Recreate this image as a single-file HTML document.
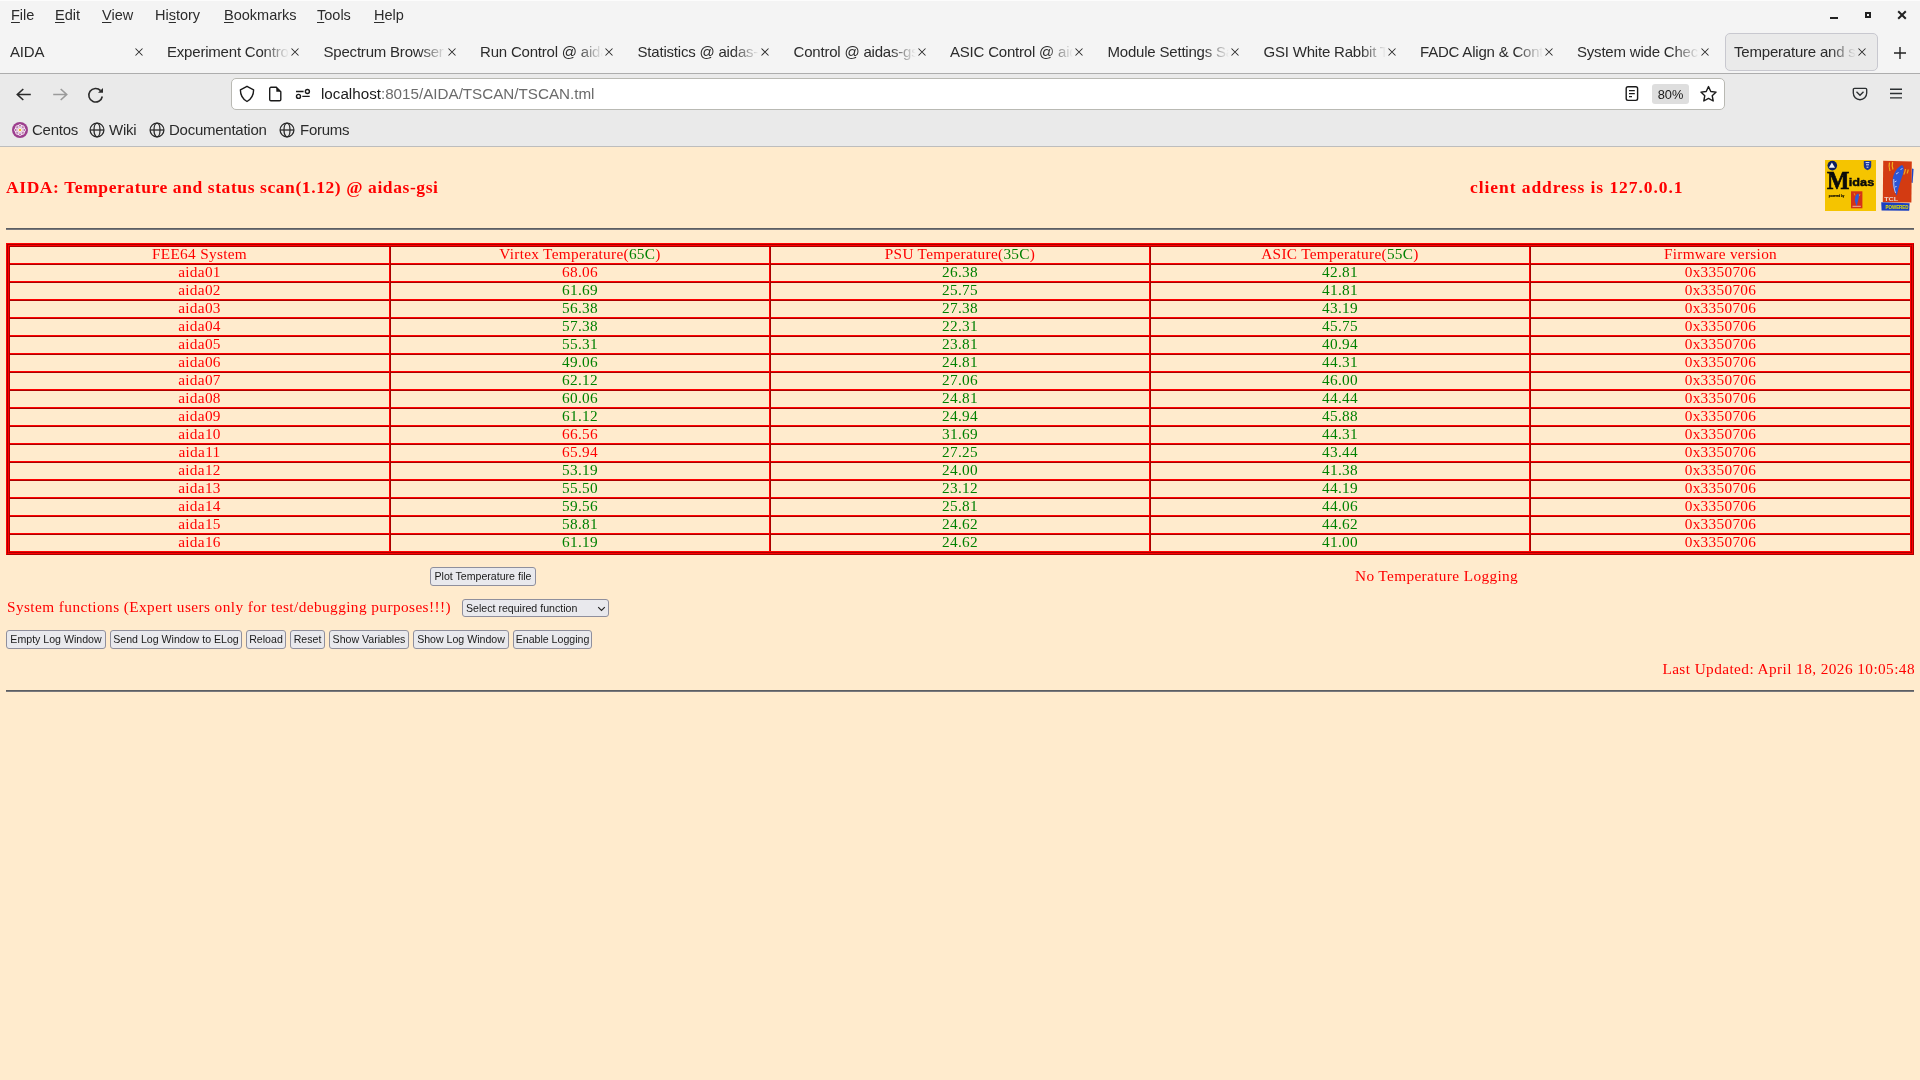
<!DOCTYPE html>
<html><head><meta charset="utf-8">
<style>
*{box-sizing:border-box}
html,body{margin:0;padding:0}
body{width:1920px;height:1080px;overflow:hidden;position:relative;background:#ffebcd;font-family:"Liberation Sans",sans-serif}
.abs{position:absolute}
#titlebar{left:0;top:0;width:1920px;height:74px;background:#f4f4f4;border-top:1px solid #fcfcfc}
#sep1{left:0;top:73px;width:1920px;height:1px;background:#adadad}
#nav{left:0;top:74px;width:1920px;height:73px;background:#eaeaea;border-bottom:1px solid #bdbdbd}
.menu{top:5px;font-size:14.5px;color:#2b2b2b;line-height:20px}
.menu u{text-decoration:underline;text-decoration-thickness:1.3px;text-underline-offset:1.5px}
.tab{top:42px;font-size:15px;letter-spacing:-0.2px;color:#2b2b2b;line-height:20px;white-space:nowrap;overflow:hidden}
.tabx{top:48px;width:8px;height:8px}
#url{left:231px;top:78px;width:1494px;height:32px;background:#fff;border:1px solid #b9b9b3;border-radius:5px}
.bm{top:121px;font-size:15px;letter-spacing:-0.25px;color:#2b2b2b;line-height:18px;white-space:nowrap}
#page{left:0;top:147px;width:1920px;height:933px}
.serif{font-family:"Liberation Serif",serif}
</style><style>
.cell{height:16px;line-height:16px;font-family:"Liberation Serif",serif;font-size:15.3px;letter-spacing:0.3px;text-align:center;white-space:nowrap}
.title{font-weight:bold;color:#ff0000;line-height:22px;white-space:nowrap}
.txt{font-size:15.3px;letter-spacing:0.37px;color:#ff0000;line-height:18px;white-space:nowrap}
.hr{left:6px;width:1908px;height:2px;background:linear-gradient(#5c5e62 50%,#78787c 50%)}
.btn{height:19px;border:1px solid #8f8f9d;border-radius:3px;background:#e9e9ed;font-size:10.6px;line-height:17px;color:#1a1a1a;text-align:center;white-space:nowrap;overflow:hidden}
.sel{text-align:left;padding-left:3px;height:18px;line-height:16px}
</style></head><body>
<div id="root" style="position:absolute;left:0;top:0;width:1920px;height:1080px;will-change:transform"><div class="abs" id="titlebar"></div>
<div class="abs" id="sep1"></div>
<div class="abs" id="nav"></div>

<!-- menu -->
<div class="abs menu" style="left:11px"><u>F</u>ile</div>
<div class="abs menu" style="left:55px"><u>E</u>dit</div>
<div class="abs menu" style="left:102px"><u>V</u>iew</div>
<div class="abs menu" style="left:155px">Hi<u>s</u>tory</div>
<div class="abs menu" style="left:224px"><u>B</u>ookmarks</div>
<div class="abs menu" style="left:317px"><u>T</u>ools</div>
<div class="abs menu" style="left:374px"><u>H</u>elp</div>


<!-- window controls -->
<div class="abs" style="left:1830px;top:17px;width:8px;height:2px;background:#222"></div>
<div class="abs" style="left:1865px;top:12px;width:6px;height:6px;border:2px solid #222"></div>
<svg class="abs" style="left:1897px;top:10px" width="10" height="10" viewBox="0 0 10 10"><path d="M1.2 1.2L8.8 8.8M8.8 1.2L1.2 8.8" stroke="#222" stroke-width="2"/></svg>

<!-- active tab -->
<div class="abs" style="left:1725px;top:33px;width:153px;height:38px;background:#eaeaea;border:1px solid #c8c8cf;border-radius:5px"></div>
<div class="abs tab" style="left:10px;width:123px;">AIDA</div>
<svg class="abs tabx" style="left:135px" viewBox="0 0 8 8"><path d="M0.5 0.5L7.5 7.5M7.5 0.5L0.5 7.5" stroke="#2a2a2a" stroke-width="1.05"/></svg>
<div class="abs tab" style="left:167px;width:122px;mask-image:linear-gradient(to right,#000 calc(100% - 26px),transparent);-webkit-mask-image:linear-gradient(to right,#000 calc(100% - 26px),transparent);">Experiment Control</div>
<svg class="abs tabx" style="left:291px" viewBox="0 0 8 8"><path d="M0.5 0.5L7.5 7.5M7.5 0.5L0.5 7.5" stroke="#2a2a2a" stroke-width="1.05"/></svg>
<div class="abs tab" style="left:323.5px;width:122.5px;mask-image:linear-gradient(to right,#000 calc(100% - 26px),transparent);-webkit-mask-image:linear-gradient(to right,#000 calc(100% - 26px),transparent);">Spectrum Browser</div>
<svg class="abs tabx" style="left:448px" viewBox="0 0 8 8"><path d="M0.5 0.5L7.5 7.5M7.5 0.5L0.5 7.5" stroke="#2a2a2a" stroke-width="1.05"/></svg>
<div class="abs tab" style="left:480px;width:123px;mask-image:linear-gradient(to right,#000 calc(100% - 26px),transparent);-webkit-mask-image:linear-gradient(to right,#000 calc(100% - 26px),transparent);">Run Control @ aidas-gsi</div>
<svg class="abs tabx" style="left:605px" viewBox="0 0 8 8"><path d="M0.5 0.5L7.5 7.5M7.5 0.5L0.5 7.5" stroke="#2a2a2a" stroke-width="1.05"/></svg>
<div class="abs tab" style="left:637.5px;width:121.5px;mask-image:linear-gradient(to right,#000 calc(100% - 26px),transparent);-webkit-mask-image:linear-gradient(to right,#000 calc(100% - 26px),transparent);">Statistics @ aidas-gsi</div>
<svg class="abs tabx" style="left:761px" viewBox="0 0 8 8"><path d="M0.5 0.5L7.5 7.5M7.5 0.5L0.5 7.5" stroke="#2a2a2a" stroke-width="1.05"/></svg>
<div class="abs tab" style="left:793.5px;width:122.5px;mask-image:linear-gradient(to right,#000 calc(100% - 26px),transparent);-webkit-mask-image:linear-gradient(to right,#000 calc(100% - 26px),transparent);">Control @ aidas-gsi</div>
<svg class="abs tabx" style="left:918px" viewBox="0 0 8 8"><path d="M0.5 0.5L7.5 7.5M7.5 0.5L0.5 7.5" stroke="#2a2a2a" stroke-width="1.05"/></svg>
<div class="abs tab" style="left:950px;width:123px;mask-image:linear-gradient(to right,#000 calc(100% - 26px),transparent);-webkit-mask-image:linear-gradient(to right,#000 calc(100% - 26px),transparent);">ASIC Control @ aidas-gsi</div>
<svg class="abs tabx" style="left:1075px" viewBox="0 0 8 8"><path d="M0.5 0.5L7.5 7.5M7.5 0.5L0.5 7.5" stroke="#2a2a2a" stroke-width="1.05"/></svg>
<div class="abs tab" style="left:1107.5px;width:121.5px;mask-image:linear-gradient(to right,#000 calc(100% - 26px),transparent);-webkit-mask-image:linear-gradient(to right,#000 calc(100% - 26px),transparent);">Module Settings Save</div>
<svg class="abs tabx" style="left:1231px" viewBox="0 0 8 8"><path d="M0.5 0.5L7.5 7.5M7.5 0.5L0.5 7.5" stroke="#2a2a2a" stroke-width="1.05"/></svg>
<div class="abs tab" style="left:1263.5px;width:122.5px;mask-image:linear-gradient(to right,#000 calc(100% - 26px),transparent);-webkit-mask-image:linear-gradient(to right,#000 calc(100% - 26px),transparent);">GSI White Rabbit Trigger</div>
<svg class="abs tabx" style="left:1388px" viewBox="0 0 8 8"><path d="M0.5 0.5L7.5 7.5M7.5 0.5L0.5 7.5" stroke="#2a2a2a" stroke-width="1.05"/></svg>
<div class="abs tab" style="left:1420px;width:123px;mask-image:linear-gradient(to right,#000 calc(100% - 26px),transparent);-webkit-mask-image:linear-gradient(to right,#000 calc(100% - 26px),transparent);">FADC Align &amp; Control</div>
<svg class="abs tabx" style="left:1545px" viewBox="0 0 8 8"><path d="M0.5 0.5L7.5 7.5M7.5 0.5L0.5 7.5" stroke="#2a2a2a" stroke-width="1.05"/></svg>
<div class="abs tab" style="left:1577px;width:122px;mask-image:linear-gradient(to right,#000 calc(100% - 26px),transparent);-webkit-mask-image:linear-gradient(to right,#000 calc(100% - 26px),transparent);">System wide Checks</div>
<svg class="abs tabx" style="left:1701px" viewBox="0 0 8 8"><path d="M0.5 0.5L7.5 7.5M7.5 0.5L0.5 7.5" stroke="#2a2a2a" stroke-width="1.05"/></svg>
<div class="abs tab" style="left:1734px;width:122px;mask-image:linear-gradient(to right,#000 calc(100% - 26px),transparent);-webkit-mask-image:linear-gradient(to right,#000 calc(100% - 26px),transparent);">Temperature and status scan</div>
<svg class="abs tabx" style="left:1858px" viewBox="0 0 8 8"><path d="M0.5 0.5L7.5 7.5M7.5 0.5L0.5 7.5" stroke="#2a2a2a" stroke-width="1.05"/></svg>
<svg class="abs" style="left:1893px;top:46px" width="14" height="14" viewBox="0 0 14 14"><path d="M7 1V13M1 7H13" stroke="#222" stroke-width="1.4"/></svg>

<!-- nav buttons -->
<svg class="abs" style="left:14px;top:86px" width="20" height="18" viewBox="0 0 20 18"><path d="M3.3 8.5H16.8M9.3 3L3.3 8.5L9.3 14" fill="none" stroke="#2b2b2b" stroke-width="1.6"/></svg>
<svg class="abs" style="left:50px;top:86px" width="20" height="18" viewBox="0 0 20 18"><path d="M3.2 8.5H16.7M10.7 3L16.7 8.5L10.7 14" fill="none" stroke="#9a9a9a" stroke-width="1.6"/></svg>
<svg class="abs" style="left:86px;top:85px" width="20" height="20" viewBox="0 0 20 20"><path d="M16.3 11.5A6.8 6.8 0 1 1 14.6 5.6" fill="none" stroke="#2b2b2b" stroke-width="1.6"/><path d="M12 7.7L17 3V7.7Z" fill="#2b2b2b"/></svg>

<div class="abs" id="url"></div>
<svg class="abs" style="left:238px;top:85px" width="18" height="18" viewBox="0 0 18 18"><path d="M9 1.3L15.6 4.9C15.6 10.5 13.5 13.8 9 16.5C4.5 13.8 2.4 10.5 2.4 4.9Z" fill="none" stroke="#1a1a1a" stroke-width="1.4" stroke-linejoin="round"/></svg>
<svg class="abs" style="left:267px;top:86px" width="16" height="16" viewBox="0 0 16 16"><path d="M4 1.3H9.3L13.8 5.7V13.4A1.3 1.3 0 0 1 12.5 14.7H4A1.3 1.3 0 0 1 2.7 13.4V2.6A1.3 1.3 0 0 1 4 1.3Z" fill="none" stroke="#1a1a1a" stroke-width="1.4"/><path d="M9.3 1.3V5.7H13.8Z" fill="#1a1a1a"/></svg>
<svg class="abs" style="left:294px;top:87px" width="18" height="14" viewBox="0 0 18 14"><path d="M2 4.5H9.6M8.3 9.4H15.7" stroke="#1a1a1a" stroke-width="1.4"/><circle cx="13.4" cy="4.5" r="2" fill="none" stroke="#1a1a1a" stroke-width="1.4"/><circle cx="4.5" cy="9.4" r="2" fill="none" stroke="#1a1a1a" stroke-width="1.4"/></svg>
<div class="abs" style="left:321px;top:84px;font-size:15.2px;line-height:20px;color:#1a1a1a;white-space:nowrap">localhost<span style="color:#6b6b6b">:8015/AIDA/TSCAN/TSCAN.tml</span></div>

<svg class="abs" style="left:1624px;top:85px" width="16" height="17" viewBox="0 0 16 17"><rect x="2.2" y="1.8" width="11.4" height="13.6" rx="1.8" fill="none" stroke="#1a1a1a" stroke-width="1.4"/><path d="M5 5.6H10.8M5 8.6H10.8M5 11.6H8" stroke="#1a1a1a" stroke-width="1.3"/></svg>
<div class="abs" style="left:1652px;top:84px;width:37px;height:20px;background:#dedede;border-radius:3px"></div>
<div class="abs" style="left:1652px;top:85px;width:37px;height:20px;font-size:12.8px;line-height:20px;text-align:center;color:#1a1a1a">80%</div>
<svg class="abs" style="left:1699px;top:85px" width="19" height="18" viewBox="0 0 19 18"><path d="M9.5 1.6L11.8 6.5L17.1 7.1L13.2 10.7L14.2 16L9.5 13.4L4.8 16L5.8 10.7L1.9 7.1L7.2 6.5Z" fill="none" stroke="#1a1a1a" stroke-width="1.4" stroke-linejoin="round"/></svg>
<svg class="abs" style="left:1851px;top:86px" width="18" height="16" viewBox="0 0 18 16"><path d="M3.5 2.3H14.5A1.2 1.2 0 0 1 15.7 3.5V7A6.7 6.7 0 0 1 2.3 7V3.5A1.2 1.2 0 0 1 3.5 2.3Z" fill="none" stroke="#2b2f31" stroke-width="1.35"/><path d="M5.5 5.8L9 9.3L12.5 5.8" fill="none" stroke="#2b2f31" stroke-width="1.35"/></svg>
<svg class="abs" style="left:1889px;top:87px" width="14" height="13" viewBox="0 0 14 13"><path d="M1 2.2H13M1 6.5H13M1 10.8H13" stroke="#2b2f31" stroke-width="1.35"/></svg>

<!-- bookmarks -->
<svg class="abs" style="left:12px;top:122px" width="16" height="16" viewBox="0 0 16 16"><circle cx="8" cy="8" r="8" fill="#9d3f8e"/><g fill="none" stroke="#fff" stroke-width="0.9"><circle cx="8" cy="4.6" r="2"/><circle cx="8" cy="11.4" r="2"/><circle cx="4.6" cy="8" r="2"/><circle cx="11.4" cy="8" r="2"/><circle cx="5.6" cy="5.6" r="2"/><circle cx="10.4" cy="10.4" r="2"/><circle cx="10.4" cy="5.6" r="2"/><circle cx="5.6" cy="10.4" r="2"/></g><circle cx="8" cy="8" r="1.3" fill="#f0b030"/></svg>
<div class="abs bm" style="left:32px">Centos</div>
<svg class="abs" style="left:89px;top:122px" width="16" height="16" viewBox="0 0 16 16"><g fill="none" stroke="#2b2b2b" stroke-width="1.3"><circle cx="8" cy="8" r="6.9"/><ellipse cx="8" cy="8" rx="3" ry="6.9"/><path d="M1.1 8H14.9"/></g></svg><div class="abs bm" style="left:109px">Wiki</div>
<svg class="abs" style="left:149px;top:122px" width="16" height="16" viewBox="0 0 16 16"><g fill="none" stroke="#2b2b2b" stroke-width="1.3"><circle cx="8" cy="8" r="6.9"/><ellipse cx="8" cy="8" rx="3" ry="6.9"/><path d="M1.1 8H14.9"/></g></svg><div class="abs bm" style="left:169px">Documentation</div>
<svg class="abs" style="left:279px;top:122px" width="16" height="16" viewBox="0 0 16 16"><g fill="none" stroke="#2b2b2b" stroke-width="1.3"><circle cx="8" cy="8" r="6.9"/><ellipse cx="8" cy="8" rx="3" ry="6.9"/><path d="M1.1 8H14.9"/></g></svg><div class="abs bm" style="left:300px">Forums</div>

<svg class="abs" style="left:1825px;top:160px" width="51" height="51" viewBox="0 0 51 51">
<rect width="51" height="51" fill="#f5c400"/>
<circle cx="7.3" cy="5.6" r="4.8" fill="#0b1f60"/>
<path d="M6.9 2.6L10 7.8H3.8Z" fill="#f2f2f2"/>
<path d="M38.8 1H46.2V6C46.2 8.2 44.4 9.6 42.5 10.2C40.6 9.6 38.8 8.2 38.8 6Z" fill="#1a3596"/>
<path d="M40.6 2.6H44.4M41 4.8H44M41.6 7.2H43.4" stroke="#dfe6f8" stroke-width="1"/>
<text x="1.9" y="28.6" font-family="Liberation Serif" font-weight="bold" font-size="25.5" fill="#0a0a0a" stroke="#0a0a0a" stroke-width="0.7" textLength="22.4" lengthAdjust="spacingAndGlyphs">M</text>
<text x="23.8" y="25.9" font-family="Liberation Sans" font-weight="bold" font-size="11.4" fill="#0a0a0a" stroke="#0a0a0a" stroke-width="0.45" textLength="25.4" lengthAdjust="spacingAndGlyphs">idas</text>
<text x="3.8" y="37" font-family="Liberation Sans" font-weight="bold" font-size="3.6" fill="#000" stroke="#000" stroke-width="0.15" textLength="15.5" lengthAdjust="spacingAndGlyphs">powered by</text>
<rect x="26" y="31.3" width="11.4" height="17" fill="#d43218"/>
<path d="M29.2 33.2L30 35.5M35 34L34.2 36" stroke="#f0a020" stroke-width="0.8"/>
<path d="M33 33.6C34.4 34.2 34.2 37.5 33.2 40C32.6 42 32.2 44 31.9 46.2C30.4 44 29.6 40.5 30 38C30.4 36 31.4 34.4 33 33.6Z" fill="#2f5bd8"/>
<path d="M27.5 46.3H35.8" stroke="#f0c0b0" stroke-width="0.9"/>
</svg>
<svg class="abs" style="left:1881px;top:160px" width="33" height="52" viewBox="0 0 33 52">
<path d="M31 8.5L32.6 8.9L31.6 23L30.2 22.6Z" fill="#1f46c8"/>
<path d="M2.2 0.8L30.8 1.4L30.4 42.6L1.8 42.2Z" fill="#d33b12"/>
<path d="M0.2 42.2L28.6 43.2L28.2 50.8L0.6 50.4Z" fill="#1a3fc2"/>
<text x="4.5" y="49.2" font-family="Liberation Sans" font-weight="bold" font-size="6.2" fill="#e6e200" textLength="23" lengthAdjust="spacingAndGlyphs">POWERED</text>
<text x="3.2" y="40.6" font-family="Liberation Sans" font-weight="bold" font-size="5.6" fill="#eed2c8" textLength="14" lengthAdjust="spacingAndGlyphs">TCL</text>
<path d="M8.5 2.5C7.8 5 8 8 9 11M11.6 2C11 4.5 11.2 7 12 9.5M24.5 9C24.2 11 23.6 13 22.8 14.5M27.2 9.5C27 11 26.6 12.5 26 13.5" fill="none" stroke="#f0b020" stroke-width="1.2"/>
<path d="M21 4.9C23.6 6 23.2 12 20.6 18C19.2 22 17.6 28 15.8 35.4C13.2 32 11.2 26 11.6 20C12 14 16 7 21 4.9Z" fill="#2b55d6"/>
<path d="M12.8 19C12.4 24 13 29 14.6 33M15 14L17.5 12.5M13.5 22L15.5 21M13.8 27L15.6 26.5M19.5 10L21.5 8" fill="none" stroke="#e8e8f0" stroke-width="0.8"/>
</svg>
<div class="abs" style="left:6px;top:243px;width:1908px;height:312px;border:1px solid;border-color:#ff0000 #aa0000 #aa0000 #ff0000"></div>
<div class="abs" style="left:7px;top:244px;width:1906px;height:310px;border:1px solid;border-color:#aa0000 #ff0000 #ff0000 #aa0000"></div>
<div class="abs" style="left:8px;top:245px;width:1904px;height:308px;border:1px solid;border-color:#ff0000 #aa0000 #aa0000 #ff0000"></div>
<div class="abs" style="left:9px;top:246px;width:1902px;height:306px;border:1px solid;border-color:#aa0000 #ff0000 #ff0000 #aa0000"></div>
<div class="abs" style="left:10px;top:263px;width:1900px;height:1px;background:#ff0000"></div>
<div class="abs" style="left:10px;top:264px;width:1900px;height:1px;background:#aa0000"></div>
<div class="abs" style="left:10px;top:281px;width:1900px;height:1px;background:#ff0000"></div>
<div class="abs" style="left:10px;top:282px;width:1900px;height:1px;background:#aa0000"></div>
<div class="abs" style="left:10px;top:299px;width:1900px;height:1px;background:#ff0000"></div>
<div class="abs" style="left:10px;top:300px;width:1900px;height:1px;background:#aa0000"></div>
<div class="abs" style="left:10px;top:317px;width:1900px;height:1px;background:#ff0000"></div>
<div class="abs" style="left:10px;top:318px;width:1900px;height:1px;background:#aa0000"></div>
<div class="abs" style="left:10px;top:335px;width:1900px;height:1px;background:#ff0000"></div>
<div class="abs" style="left:10px;top:336px;width:1900px;height:1px;background:#aa0000"></div>
<div class="abs" style="left:10px;top:353px;width:1900px;height:1px;background:#ff0000"></div>
<div class="abs" style="left:10px;top:354px;width:1900px;height:1px;background:#aa0000"></div>
<div class="abs" style="left:10px;top:371px;width:1900px;height:1px;background:#ff0000"></div>
<div class="abs" style="left:10px;top:372px;width:1900px;height:1px;background:#aa0000"></div>
<div class="abs" style="left:10px;top:389px;width:1900px;height:1px;background:#ff0000"></div>
<div class="abs" style="left:10px;top:390px;width:1900px;height:1px;background:#aa0000"></div>
<div class="abs" style="left:10px;top:407px;width:1900px;height:1px;background:#ff0000"></div>
<div class="abs" style="left:10px;top:408px;width:1900px;height:1px;background:#aa0000"></div>
<div class="abs" style="left:10px;top:425px;width:1900px;height:1px;background:#ff0000"></div>
<div class="abs" style="left:10px;top:426px;width:1900px;height:1px;background:#aa0000"></div>
<div class="abs" style="left:10px;top:443px;width:1900px;height:1px;background:#ff0000"></div>
<div class="abs" style="left:10px;top:444px;width:1900px;height:1px;background:#aa0000"></div>
<div class="abs" style="left:10px;top:461px;width:1900px;height:1px;background:#ff0000"></div>
<div class="abs" style="left:10px;top:462px;width:1900px;height:1px;background:#aa0000"></div>
<div class="abs" style="left:10px;top:479px;width:1900px;height:1px;background:#ff0000"></div>
<div class="abs" style="left:10px;top:480px;width:1900px;height:1px;background:#aa0000"></div>
<div class="abs" style="left:10px;top:497px;width:1900px;height:1px;background:#ff0000"></div>
<div class="abs" style="left:10px;top:498px;width:1900px;height:1px;background:#aa0000"></div>
<div class="abs" style="left:10px;top:515px;width:1900px;height:1px;background:#ff0000"></div>
<div class="abs" style="left:10px;top:516px;width:1900px;height:1px;background:#aa0000"></div>
<div class="abs" style="left:10px;top:533px;width:1900px;height:1px;background:#ff0000"></div>
<div class="abs" style="left:10px;top:534px;width:1900px;height:1px;background:#aa0000"></div>
<div class="abs" style="left:389px;top:247px;width:1px;height:304px;background:#ff0000"></div>
<div class="abs" style="left:390px;top:247px;width:1px;height:304px;background:#aa0000"></div>
<div class="abs" style="left:769px;top:247px;width:1px;height:304px;background:#ff0000"></div>
<div class="abs" style="left:770px;top:247px;width:1px;height:304px;background:#aa0000"></div>
<div class="abs" style="left:1149px;top:247px;width:1px;height:304px;background:#ff0000"></div>
<div class="abs" style="left:1150px;top:247px;width:1px;height:304px;background:#aa0000"></div>
<div class="abs" style="left:1529px;top:247px;width:1px;height:304px;background:#ff0000"></div>
<div class="abs" style="left:1530px;top:247px;width:1px;height:304px;background:#aa0000"></div>
<div class="abs cell" style="left:10px;top:246px;width:379px;color:#ff0000">FEE64 System</div>
<div class="abs cell" style="left:391px;top:246px;width:378px;color:#ff0000">Virtex Temperature(<span style="color:#008000">65C</span>)</div>
<div class="abs cell" style="left:771px;top:246px;width:378px;color:#ff0000">PSU Temperature(<span style="color:#008000">35C</span>)</div>
<div class="abs cell" style="left:1151px;top:246px;width:378px;color:#ff0000">ASIC Temperature(<span style="color:#008000">55C</span>)</div>
<div class="abs cell" style="left:1531px;top:246px;width:379px;color:#ff0000">Firmware version</div>
<div class="abs cell" style="left:10px;top:264px;width:379px;color:#ff0000">aida01</div>
<div class="abs cell" style="left:391px;top:264px;width:378px;color:#ff0000">68.06</div>
<div class="abs cell" style="left:771px;top:264px;width:378px;color:#008000">26.38</div>
<div class="abs cell" style="left:1151px;top:264px;width:378px;color:#008000">42.81</div>
<div class="abs cell" style="left:1531px;top:264px;width:379px;color:#ff0000">0x3350706</div>
<div class="abs cell" style="left:10px;top:282px;width:379px;color:#ff0000">aida02</div>
<div class="abs cell" style="left:391px;top:282px;width:378px;color:#008000">61.69</div>
<div class="abs cell" style="left:771px;top:282px;width:378px;color:#008000">25.75</div>
<div class="abs cell" style="left:1151px;top:282px;width:378px;color:#008000">41.81</div>
<div class="abs cell" style="left:1531px;top:282px;width:379px;color:#ff0000">0x3350706</div>
<div class="abs cell" style="left:10px;top:300px;width:379px;color:#ff0000">aida03</div>
<div class="abs cell" style="left:391px;top:300px;width:378px;color:#008000">56.38</div>
<div class="abs cell" style="left:771px;top:300px;width:378px;color:#008000">27.38</div>
<div class="abs cell" style="left:1151px;top:300px;width:378px;color:#008000">43.19</div>
<div class="abs cell" style="left:1531px;top:300px;width:379px;color:#ff0000">0x3350706</div>
<div class="abs cell" style="left:10px;top:318px;width:379px;color:#ff0000">aida04</div>
<div class="abs cell" style="left:391px;top:318px;width:378px;color:#008000">57.38</div>
<div class="abs cell" style="left:771px;top:318px;width:378px;color:#008000">22.31</div>
<div class="abs cell" style="left:1151px;top:318px;width:378px;color:#008000">45.75</div>
<div class="abs cell" style="left:1531px;top:318px;width:379px;color:#ff0000">0x3350706</div>
<div class="abs cell" style="left:10px;top:336px;width:379px;color:#ff0000">aida05</div>
<div class="abs cell" style="left:391px;top:336px;width:378px;color:#008000">55.31</div>
<div class="abs cell" style="left:771px;top:336px;width:378px;color:#008000">23.81</div>
<div class="abs cell" style="left:1151px;top:336px;width:378px;color:#008000">40.94</div>
<div class="abs cell" style="left:1531px;top:336px;width:379px;color:#ff0000">0x3350706</div>
<div class="abs cell" style="left:10px;top:354px;width:379px;color:#ff0000">aida06</div>
<div class="abs cell" style="left:391px;top:354px;width:378px;color:#008000">49.06</div>
<div class="abs cell" style="left:771px;top:354px;width:378px;color:#008000">24.81</div>
<div class="abs cell" style="left:1151px;top:354px;width:378px;color:#008000">44.31</div>
<div class="abs cell" style="left:1531px;top:354px;width:379px;color:#ff0000">0x3350706</div>
<div class="abs cell" style="left:10px;top:372px;width:379px;color:#ff0000">aida07</div>
<div class="abs cell" style="left:391px;top:372px;width:378px;color:#008000">62.12</div>
<div class="abs cell" style="left:771px;top:372px;width:378px;color:#008000">27.06</div>
<div class="abs cell" style="left:1151px;top:372px;width:378px;color:#008000">46.00</div>
<div class="abs cell" style="left:1531px;top:372px;width:379px;color:#ff0000">0x3350706</div>
<div class="abs cell" style="left:10px;top:390px;width:379px;color:#ff0000">aida08</div>
<div class="abs cell" style="left:391px;top:390px;width:378px;color:#008000">60.06</div>
<div class="abs cell" style="left:771px;top:390px;width:378px;color:#008000">24.81</div>
<div class="abs cell" style="left:1151px;top:390px;width:378px;color:#008000">44.44</div>
<div class="abs cell" style="left:1531px;top:390px;width:379px;color:#ff0000">0x3350706</div>
<div class="abs cell" style="left:10px;top:408px;width:379px;color:#ff0000">aida09</div>
<div class="abs cell" style="left:391px;top:408px;width:378px;color:#008000">61.12</div>
<div class="abs cell" style="left:771px;top:408px;width:378px;color:#008000">24.94</div>
<div class="abs cell" style="left:1151px;top:408px;width:378px;color:#008000">45.88</div>
<div class="abs cell" style="left:1531px;top:408px;width:379px;color:#ff0000">0x3350706</div>
<div class="abs cell" style="left:10px;top:426px;width:379px;color:#ff0000">aida10</div>
<div class="abs cell" style="left:391px;top:426px;width:378px;color:#ff0000">66.56</div>
<div class="abs cell" style="left:771px;top:426px;width:378px;color:#008000">31.69</div>
<div class="abs cell" style="left:1151px;top:426px;width:378px;color:#008000">44.31</div>
<div class="abs cell" style="left:1531px;top:426px;width:379px;color:#ff0000">0x3350706</div>
<div class="abs cell" style="left:10px;top:444px;width:379px;color:#ff0000">aida11</div>
<div class="abs cell" style="left:391px;top:444px;width:378px;color:#ff0000">65.94</div>
<div class="abs cell" style="left:771px;top:444px;width:378px;color:#008000">27.25</div>
<div class="abs cell" style="left:1151px;top:444px;width:378px;color:#008000">43.44</div>
<div class="abs cell" style="left:1531px;top:444px;width:379px;color:#ff0000">0x3350706</div>
<div class="abs cell" style="left:10px;top:462px;width:379px;color:#ff0000">aida12</div>
<div class="abs cell" style="left:391px;top:462px;width:378px;color:#008000">53.19</div>
<div class="abs cell" style="left:771px;top:462px;width:378px;color:#008000">24.00</div>
<div class="abs cell" style="left:1151px;top:462px;width:378px;color:#008000">41.38</div>
<div class="abs cell" style="left:1531px;top:462px;width:379px;color:#ff0000">0x3350706</div>
<div class="abs cell" style="left:10px;top:480px;width:379px;color:#ff0000">aida13</div>
<div class="abs cell" style="left:391px;top:480px;width:378px;color:#008000">55.50</div>
<div class="abs cell" style="left:771px;top:480px;width:378px;color:#008000">23.12</div>
<div class="abs cell" style="left:1151px;top:480px;width:378px;color:#008000">44.19</div>
<div class="abs cell" style="left:1531px;top:480px;width:379px;color:#ff0000">0x3350706</div>
<div class="abs cell" style="left:10px;top:498px;width:379px;color:#ff0000">aida14</div>
<div class="abs cell" style="left:391px;top:498px;width:378px;color:#008000">59.56</div>
<div class="abs cell" style="left:771px;top:498px;width:378px;color:#008000">25.81</div>
<div class="abs cell" style="left:1151px;top:498px;width:378px;color:#008000">44.06</div>
<div class="abs cell" style="left:1531px;top:498px;width:379px;color:#ff0000">0x3350706</div>
<div class="abs cell" style="left:10px;top:516px;width:379px;color:#ff0000">aida15</div>
<div class="abs cell" style="left:391px;top:516px;width:378px;color:#008000">58.81</div>
<div class="abs cell" style="left:771px;top:516px;width:378px;color:#008000">24.62</div>
<div class="abs cell" style="left:1151px;top:516px;width:378px;color:#008000">44.62</div>
<div class="abs cell" style="left:1531px;top:516px;width:379px;color:#ff0000">0x3350706</div>
<div class="abs cell" style="left:10px;top:534px;width:379px;color:#ff0000">aida16</div>
<div class="abs cell" style="left:391px;top:534px;width:378px;color:#008000">61.19</div>
<div class="abs cell" style="left:771px;top:534px;width:378px;color:#008000">24.62</div>
<div class="abs cell" style="left:1151px;top:534px;width:378px;color:#008000">41.00</div>
<div class="abs cell" style="left:1531px;top:534px;width:379px;color:#ff0000">0x3350706</div>
<div class="abs serif title" style="left:6px;top:176px;font-size:17.5px;letter-spacing:0.59px">AIDA: Temperature and status scan(1.12) @ aidas-gsi</div>
<div class="abs serif title" style="left:1470px;top:176px;font-size:17.5px;letter-spacing:0.93px">client address is 127.0.0.1</div>
<div class="abs hr" style="top:228px"></div>
<div class="abs btn" style="left:430px;top:567px;width:106px">Plot Temperature file</div>
<div class="abs serif txt" style="left:1355px;top:567px">No Temperature Logging</div>
<div class="abs serif txt" style="left:7px;top:598px;letter-spacing:0.42px">System functions (Expert users only for test/debugging purposes!!!)</div>
<div class="abs btn sel" style="left:462px;top:599px;width:147px">Select required function<svg class="abs" style="left:134px;top:5.5px" width="9" height="6" viewBox="0 0 9 6"><path d="M1.2 1.2L4.5 4.5L7.8 1.2" fill="none" stroke="#222" stroke-width="1.15"/></svg></div>
<div class="abs btn" style="left:6px;top:630px;width:100px">Empty Log Window</div>
<div class="abs btn" style="left:110px;top:630px;width:132px">Send Log Window to ELog</div>
<div class="abs btn" style="left:246px;top:630px;width:40px">Reload</div>
<div class="abs btn" style="left:290px;top:630px;width:35px">Reset</div>
<div class="abs btn" style="left:329px;top:630px;width:80px">Show Variables</div>
<div class="abs btn" style="left:413px;top:630px;width:96px">Show Log Window</div>
<div class="abs btn" style="left:513px;top:630px;width:79px">Enable Logging</div>
<div class="abs serif txt" style="left:500px;width:1415px;text-align:right;top:660px;letter-spacing:0.42px">Last Updated: April 18, 2026 10:05:48</div>
<div class="abs hr" style="top:690px"></div>

</div></body></html>
